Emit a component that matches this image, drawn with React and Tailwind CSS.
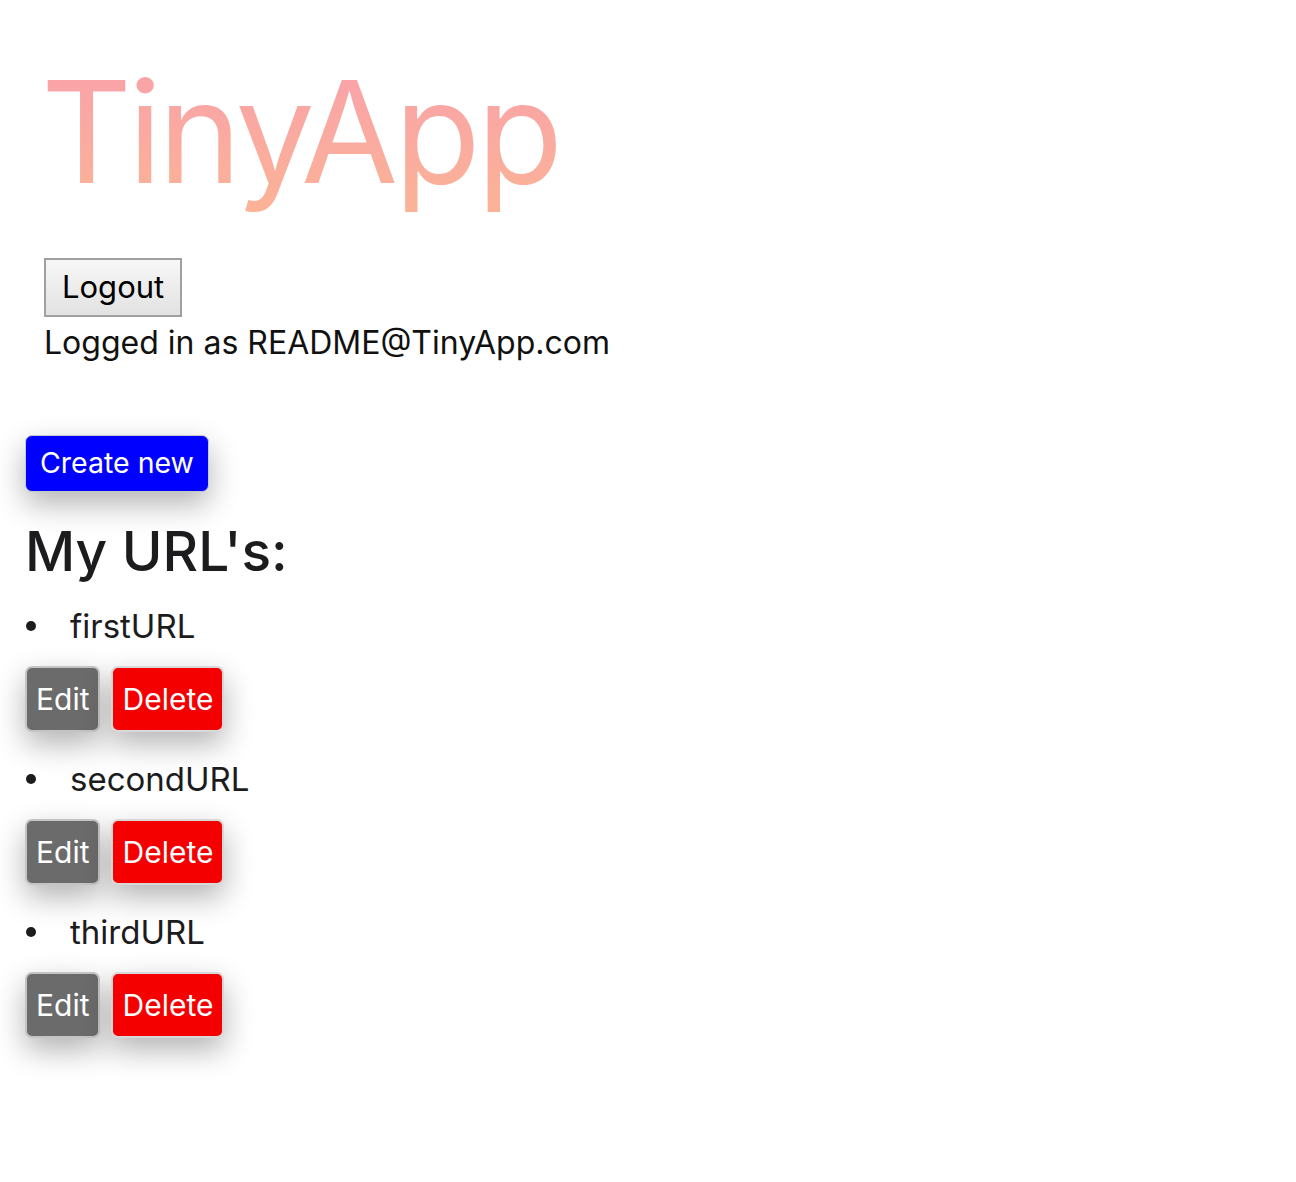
const URLS = ['firstURL', 'secondURL', 'thirdURL'];

export default function App() {
  return (
    <div className="min-h-[1182px] bg-white px-[25px] font-['Inter','Noto_Sans',sans-serif] text-[#1c1c1e]">
      {/* Header */}
      <header className="pl-[16px] pt-[52px]">
        <h1 className="inline-block bg-gradient-to-b from-[#f9a0ab] to-[#fbb396] bg-clip-text text-[141px] leading-[160px] tracking-[-4px] text-transparent">
          TinyApp
        </h1>
        <div className="mt-[46px] pl-[3px]">
          <button className="h-[59px] border-2 border-[#a0a0a0] bg-gradient-to-b from-[#f7f7f7] to-[#e2e2e2] px-[16px] text-[31px] text-black">
            Logout
          </button>
          <p className="mt-[4px] text-[32px] leading-[44px] text-[#111]">Logged in as README@TinyApp.com</p>
        </div>
      </header>

      <main className="mt-[70px]">
        <button className="h-[57px] rounded-[7px] border border-[#c8c8c8] bg-[#0000ff] px-[14px] text-[28.5px] text-white shadow-[0_12px_30px_rgba(0,0,0,0.3)]">
          Create new
        </button>
        <h2 className="mt-[24px] text-[55px] font-medium leading-[70px]">My URL's:</h2>

        <ul className="mt-[18px]">
          {URLS.map((u) => (
            <li key={u} className="mb-[25px]">
              <div className="flex items-center text-[33px] leading-[44px]">
                <span className="ml-[1px] mr-[34px] h-[10px] w-[10px] rounded-full bg-[#1c1c1e]" />
                <span>{u}</span>
              </div>
              <div className="mt-[18px] flex gap-[11px]">
                <button className="h-[66px] rounded-[7px] border-2 border-[#c4c4c4] bg-[#6b6b6b] px-[9px] text-[30px] text-white shadow-[0_12px_30px_rgba(0,0,0,0.3)]">
                  Edit
                </button>
                <button className="h-[66px] rounded-[7px] border-2 border-[#d8d8d8] bg-[#f50000] px-[9px] text-[30px] text-white shadow-[0_12px_30px_rgba(0,0,0,0.3)]">
                  Delete
                </button>
              </div>
            </li>
          ))}
        </ul>
      </main>
    </div>
  );
}
